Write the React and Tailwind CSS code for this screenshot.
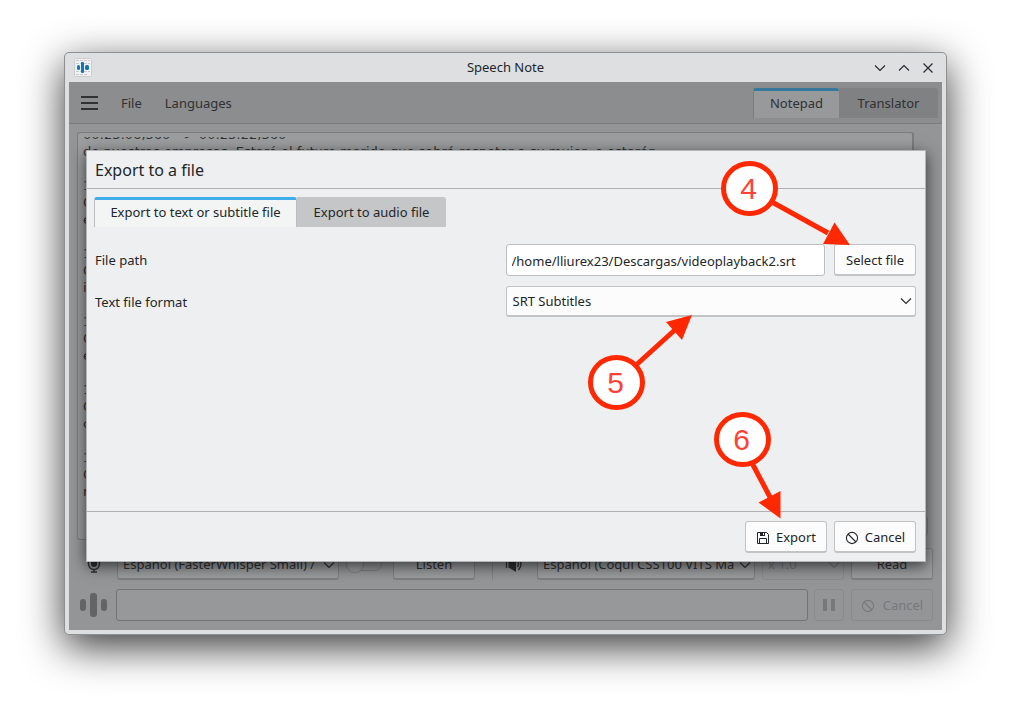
import React, { useState } from "react";

const transcript = `00:23:06,360 --> 00:23:22,360
de nuestras empresas. Estaré el futuro marido que sabrá respetar a su mujer, o estarán

1
0
e

1
0
i

1
0
e

1
0
c

1
0
r`;

const Chevron = ({ up, className }) => (
  <svg className={className} width="12" height="12" viewBox="0 0 12 12" fill="none" stroke="currentColor" strokeWidth="1.1">
    <path d={up ? "M1 8.5 6 3.5l5 5" : "M1 3.5 6 8.5l5-5"} />
  </svg>
);

const ForbidIcon = () => (
  <svg width="14" height="14" viewBox="0 0 14 14" fill="none" stroke="currentColor" strokeWidth="1.1">
    <circle cx="7" cy="7" r="5.6" />
    <path d="M3 3l8 8" />
  </svg>
);

const SaveIcon = () => (
  <svg width="14" height="14" viewBox="0 0 14 14" fill="none" stroke="currentColor" strokeWidth="1">
    <path d="M1.5 1.5h9l2 2v9h-11z" />
    <path d="M3.5 12.5v-5h7v5" />
    <path d="M4 1h5v4H4z" fill="currentColor" stroke="none" />
    <path d="M7 2h1v2H7z" fill="#fcfcfc" stroke="none" />
  </svg>
);

const MicIcon = () => (
  <svg width="14" height="18" viewBox="0 0 14 18" fill="none" stroke="currentColor">
    <rect x="4" y="1" width="6" height="11" rx="3" fill="currentColor" stroke="none" />
    <path d="M1.5 7v2a5.5 5.5 0 0 0 11 0V7" strokeWidth="1.4" />
    <path d="M7 14v3M4 17h6" strokeWidth="1.6" />
  </svg>
);

const SpeakerIcon = () => (
  <svg width="18" height="18" viewBox="0 0 18 18" fill="none" stroke="currentColor" strokeWidth="1.3">
    <path d="M3.5 5h1L11 1v16l-6.5-4h-1z" fill="currentColor" stroke="none" />
    <path d="M1.5 5v8M12.5 6q2 3 0 6M13.5 3q5 6 0 12" />
  </svg>
);

function AppIcon() {
  return (
    <svg width="18" height="19" viewBox="0 0 18 19">
      <rect x="0.5" y="0.5" width="17" height="18" rx="1" fill="#f1f1f2" stroke="#cbccce" />
      <path d="M2 2.5h14M2 5.5h14M2 13.5h14M2 16.5h12" stroke="#c9cacc" strokeDasharray="3 1" />
      <rect x="3" y="7" width="3" height="5" rx="1.5" fill="#1077b5" />
      <rect x="7" y="4" width="3" height="11" rx="1" fill="#1077b5" />
      <rect x="11" y="7" width="4" height="5" rx="1.5" fill="#1077b5" />
    </svg>
  );
}

function DimButton({ children, disabled }) {
  return (
    <button
      disabled={disabled}
      className={
        disabled
          ? "flex h-8 w-[82px] shrink-0 items-center justify-center gap-2 rounded-[3px] border border-[#898a8c] pt-px text-[#77787a]"
          : "flex h-8 w-[82px] shrink-0 items-center justify-center rounded-[3px] border border-b-2 border-[#7e7f81] bg-[#9b9c9d] pt-0.5"
      }
    >
      {children}
    </button>
  );
}

function DimSelect({ label, value, className, selectClass }) {
  return (
    <div className={className}>
      <select
        aria-label={label}
        className={selectClass}
      >
        <option>{value}</option>
      </select>
      <Chevron className="pointer-events-none absolute right-1 top-2.5" />
    </div>
  );
}

function DialogButton({ children }) {
  return (
    <button className="flex h-8 w-[82px] shrink-0 items-center justify-center gap-1.5 rounded-[3px] border border-b-2 border-[#c2c3c5] bg-[#fcfcfc] pt-0.5">
      {children}
    </button>
  );
}

function Callout({ n, x, y, line, head }) {
  return (
    <g>
      <path d={line} stroke="#ff2800" strokeWidth="5" />
      <path d={head} fill="#ff2800" />
      <ellipse cx={x} cy={y} rx="26" ry="25" fill="#fff" stroke="#ff2800" strokeWidth="5" />
      <text x={x - 1} y={y + 10} textAnchor="middle" fill="#ff4238" className="font-['Liberation_Sans',sans-serif] text-[30px]">
        {n}
      </text>
    </g>
  );
}

function ExportDialog() {
  const [path, setPath] = useState("/home/lliurex23/Descargas/videoplayback2.srt");

  return (
    <div
      role="dialog"
      aria-labelledby="dialog-title"
      className="absolute inset-y-[68px] left-[17px] right-4 flex flex-col border border-[#b4b5b7] bg-[#eeeff1] text-[#232629] shadow-[0_4px_14px_rgba(0,0,0,0.65)]"
    >
      <h2 id="dialog-title" className="flex h-[38px] shrink-0 items-center border-b border-[#b0b1b3] px-2 text-base">
        Export to a file
      </h2>
      <div className="flex flex-1 flex-col pl-2 pr-[9px] pt-2">
        <div role="tablist" className="-ml-px flex h-[30px] text-[13px]">
          <button role="tab" aria-selected="true" className="w-[203px] rounded-t-[3px] border-x border-t-[3px] border-x-[#bcbdbf] border-t-[#3daee9] bg-[#f3f5f4] pb-0.5">
            Export to text or subtitle file
          </button>
          <button role="tab" aria-selected="false" className="w-[149px] rounded-tr-[3px] bg-[#c5c6c8] pt-px">
            Export to audio file
          </button>
        </div>
        <div className="mt-[17px] grid grid-cols-2 items-center gap-y-[10px]">
          <label htmlFor="path" className="pt-0.5">File path</label>
          <div className="flex gap-[9px]">
            <input
              id="path"
              value={path}
              onChange={(e) => setPath(e.target.value)}
              className="h-8 min-w-0 flex-1 rounded-[3px] border border-[#bcbdbf] bg-white px-[5px] pt-0.5"
            />
            <DialogButton>Select file</DialogButton>
          </div>
          <label htmlFor="format" className="pt-0.5">Text file format</label>
          <div className="relative">
            <select id="format" className="h-[31px] w-full appearance-none rounded-[3px] border border-b-2 border-[#c2c3c5] bg-[#fcfcfc] px-1.5 pt-0.5">
              <option>SRT Subtitles</option>
            </select>
            <Chevron className="pointer-events-none absolute right-1 top-[9px]" />
          </div>
        </div>
      </div>
      <div className="flex h-[50px] shrink-0 items-center justify-end gap-[7px] border-t border-[#b0b1b3] pl-2 pr-[9px] pt-px">
        <DialogButton>
          <SaveIcon />
          Export
        </DialogButton>
        <DialogButton>
          <ForbidIcon />
          Cancel
        </DialogButton>
      </div>
    </div>
  );
}

export default function App() {
  return (
    <div className="relative flex min-h-screen flex-col bg-white px-16 pb-[76px] pt-[52px] font-['Noto_Sans',sans-serif] text-[13px] text-[#232629]">
      <div className="flex flex-1 flex-col rounded-[5px] border border-[#8e8f91] bg-[#dedfe1] px-1 pb-1 shadow-[0_12px_40px_rgba(0,0,0,0.78)]">
        <header className="grid h-[29px] grid-cols-[1fr_auto_1fr] items-center px-[5px]">
          <AppIcon />
          <h1>Speech Note</h1>
          <div className="flex justify-end gap-3 pr-[3px]">
            <button aria-label="Minimize"><Chevron /></button>
            <button aria-label="Maximize"><Chevron up /></button>
            <button aria-label="Close">
              <svg width="12" height="12" viewBox="0 0 12 12" stroke="currentColor" strokeWidth="1.1">
                <path d="M1.5 1.5l9 9M10.5 1.5l-9 9" />
              </svg>
            </button>
          </div>
        </header>

        <main className="relative flex flex-1 flex-col bg-[#949597] text-[#2f3133]">
          <nav className="flex h-[42px] items-center border-b border-[#7b7c7e] bg-[#8c8d8f] pl-3 pr-1 pt-px">
            <button aria-label="Menu" className="flex w-[17px] flex-col gap-1">
              <span className="h-0.5 bg-[#2f3133]" />
              <span className="h-0.5 bg-[#2f3133]" />
              <span className="h-0.5 bg-[#2f3133]" />
            </button>
            <button className="ml-[23px] pt-px">File</button>
            <button className="ml-[23px] pt-px">Languages</button>
            <div role="tablist" className="ml-auto flex h-[30px]">
              <button role="tab" aria-selected="true" className="w-[86px] rounded-t-[3px] border-l border-t-[3px] border-l-[#7b7c7e] border-t-[#36789c] bg-[#98999b] pb-0.5">
                Notepad
              </button>
              <button role="tab" aria-selected="false" className="w-[99px] rounded-tr-[3px] bg-[#808183] pt-px">
                Translator
              </button>
            </div>
          </nav>

          <div className="flex flex-1 flex-col px-2 pt-2">
            <div className="mr-[20px] flex-1 rounded-[3px] border border-r-2 border-[#7b7c7e] bg-[#9c9d9e] px-[5px] pt-1">
              <div className="h-[398px] overflow-hidden">
                <textarea
                  readOnly
                  aria-label="Note"
                  wrap="off"
                  value={transcript}
                  className="-mt-[11px] block h-[409px] w-full resize-none overflow-hidden font-['DejaVu_Sans',sans-serif] leading-[17px] outline-none"
                />
              </div>
            </div>
          </div>
          <button aria-label="Scroll down" className="absolute bottom-[94px] right-3.5 h-5 w-6 rounded-[3px] border border-[#7b7c7e]" />

          <div className="mt-2 flex h-8 items-center pl-2 pr-[9px]">
            <span className="mr-1.5 flex w-[34px] shrink-0 justify-center"><MicIcon /></span>
            <DimSelect
              label="Speech to text model"
              value="Español (FasterWhisper Small) /"
              className="relative mr-[7px] min-w-0 flex-1"
              selectClass="h-[31px] w-full appearance-none rounded-[3px] border border-b-2 border-[#7e7f81] bg-[#9b9c9d] pl-[5px] pt-0.5"
            />
            <label className="relative mr-2.5 flex h-[18px] w-[37px] shrink-0 items-center">
              <input type="checkbox" role="switch" aria-label="Translate" className="ml-1 h-3.5 w-8 appearance-none rounded-full border border-[#7e7f81]" />
              <span className="absolute left-0 size-[18px] rounded-full border border-[#7e7f81] bg-[#9b9c9d]" />
            </label>
            <DimButton>Listen</DimButton>
            <span className="ml-[17px] mr-3 h-8 w-px shrink-0 bg-[#808183]" />
            <span className="mr-[14px] shrink-0"><SpeakerIcon /></span>
            <DimSelect
              label="Text to speech model"
              value="Español (Coqui CSS100 VITS Ma"
              className="relative mr-[7px] w-[218px] shrink-0"
              selectClass="h-[31px] w-full appearance-none rounded-[3px] border border-b-2 border-[#7e7f81] bg-[#9b9c9d] pl-[5px] pt-0.5"
            />
            <DimSelect
              label="Speed"
              value="x 1.0"
              className="relative mr-[7px] w-[82px] shrink-0 text-[#77787a]"
              selectClass="h-[31px] w-full appearance-none rounded-[3px] border border-[#898a8c] pl-[5px] pt-0.5"
            />
            <DimButton>Read</DimButton>
          </div>

          <div className="mb-[9px] mt-[9px] flex h-8 items-center pl-2 pr-[9px]">
            <svg className="mr-[5px] w-[34px] shrink-0" height="24" viewBox="0 0 34 24" fill="#636466">
              <rect x="3" y="6" width="6" height="12" rx="3" />
              <rect x="13" y="0" width="7" height="24" rx="3" />
              <rect x="24" y="6" width="6" height="12" rx="3" />
            </svg>
            <input aria-label="Status" readOnly className="mr-1.5 h-8 min-w-0 flex-1 rounded-[3px] border border-[#737476] bg-[#979899] px-1.5" />
            <button aria-label="Pause" disabled className="mr-[7px] flex h-8 w-[30px] shrink-0 items-center justify-center gap-1 rounded-[3px] border border-[#898a8c]">
              <span className="h-3 w-1 bg-[#77787a]" />
              <span className="h-3 w-1 bg-[#77787a]" />
            </button>
            <DimButton disabled>
              <ForbidIcon />
              Cancel
            </DimButton>
          </div>

          <ExportDialog />
        </main>
      </div>

      <svg className="pointer-events-none absolute left-0 top-0" width="1011" height="711" fill="none">
        <Callout n="4" x={749.5} y={188.5} line="M772 202 828 233" head="M850 245 834.5 222.5 823 244z" />
        <Callout n="5" x={616.5} y={382.5} line="M635 366 677 328" head="M692 315 666 322 682 340z" />
        <Callout n="6" x={742.5} y={439.5} line="M752 463 771 499" head="M780.5 518.5 780.5 491 758.5 502.5z" />
      </svg>
    </div>
  );
}
